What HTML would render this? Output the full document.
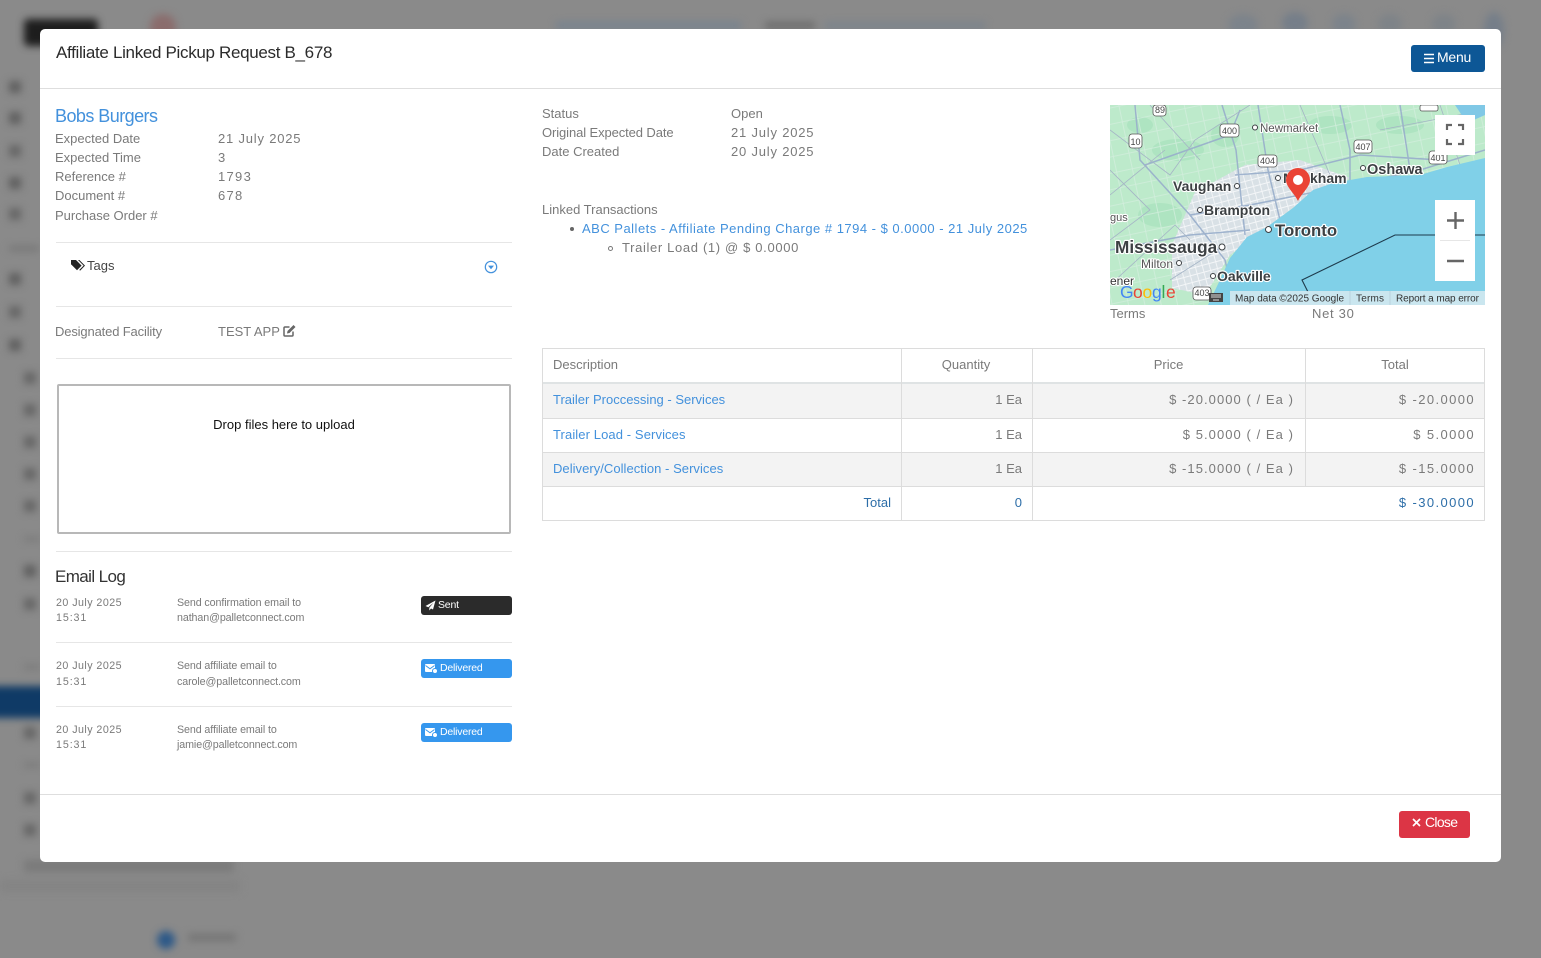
<!DOCTYPE html>
<html><head><meta charset="utf-8"><style>
html,body{margin:0;padding:0;width:1541px;height:958px;overflow:hidden;background:#8a8a8a;font-family:"Liberation Sans",sans-serif}
.bg{position:absolute;inset:0;filter:blur(4px)}
.bg div{position:absolute}
.modal{position:absolute;left:40px;top:29px;width:1461px;height:833px;background:#fff;border-radius:5px;overflow:hidden}
.p{position:absolute;left:0;top:0;width:1541px;height:958px}
.t{position:absolute;white-space:nowrap;line-height:18px;font-size:13px;color:#7a7a7a;font-weight:400;transform:translateY(1px)}
.d{letter-spacing:.8px}
.m{letter-spacing:1.06px}
.n{letter-spacing:1.4px}
.a{color:#4391dc}
.h{position:absolute;height:1px;background:#e6e6e6}
.r{position:absolute;text-align:right}
.s{font-size:10.7px;color:#7a7a7a;letter-spacing:-.1px}
.s.d{letter-spacing:.45px}
.b{position:absolute;left:421px;width:91px;height:19px;border-radius:3px;color:#fff;font-size:10.5px;line-height:19px;letter-spacing:-.2px}
.b span{position:absolute;left:17px;white-space:nowrap}
</style></head><body>
<div class="bg">
<div style="left:24px;top:19px;width:74px;height:27px;background:#1d1d1d;border-radius:4px"></div>
<div style="left:150px;top:14px;width:26px;height:26px;background:#8a6c6c;border-radius:50%"></div>
<div style="left:556px;top:22px;width:185px;height:7px;background:#76828f"></div>
<div style="left:765px;top:22px;width:50px;height:7px;background:#6c6c6c"></div>
<div style="left:825px;top:22px;width:160px;height:7px;background:#7a838c"></div>
<div style="left:1228px;top:14px;width:30px;height:22px;background:#7c838b;border-radius:50%"></div>
<div style="left:1282px;top:12px;width:26px;height:22px;background:#757e89;border-radius:50%"></div>
<div style="left:1332px;top:14px;width:24px;height:20px;background:#7c838b;border-radius:50%"></div>
<div style="left:1378px;top:14px;width:24px;height:20px;background:#7e8388;border-radius:50%"></div>
<div style="left:1432px;top:14px;width:24px;height:20px;background:#7e8388;border-radius:50%"></div>
<div style="left:1484px;top:12px;width:20px;height:36px;background:#757e89;border-radius:50%"></div>
<div style="left:9px;top:81px;width:12px;height:12px;background:#5f5f5f"></div>
<div style="left:9px;top:112px;width:12px;height:12px;background:#5f5f5f"></div>
<div style="left:9px;top:145px;width:12px;height:12px;background:#666"></div>
<div style="left:9px;top:177px;width:12px;height:12px;background:#5f5f5f"></div>
<div style="left:9px;top:208px;width:12px;height:12px;background:#666"></div>
<div style="left:9px;top:246px;width:30px;height:5px;background:#757575"></div>
<div style="left:9px;top:273px;width:12px;height:12px;background:#5f5f5f"></div>
<div style="left:9px;top:306px;width:12px;height:12px;background:#666"></div>
<div style="left:9px;top:339px;width:12px;height:12px;background:#5f5f5f"></div>
<div style="left:24px;top:372px;width:12px;height:12px;background:#666"></div>
<div style="left:24px;top:404px;width:12px;height:12px;background:#666"></div>
<div style="left:24px;top:436px;width:12px;height:12px;background:#666"></div>
<div style="left:24px;top:468px;width:12px;height:12px;background:#666"></div>
<div style="left:24px;top:500px;width:12px;height:12px;background:#666"></div>
<div style="left:24px;top:537px;width:16px;height:4px;background:#777"></div>
<div style="left:24px;top:565px;width:12px;height:12px;background:#5f5f5f"></div>
<div style="left:24px;top:598px;width:12px;height:12px;background:#666"></div>
<div style="left:24px;top:665px;width:16px;height:4px;background:#777"></div>
<div style="left:-10px;top:686px;width:250px;height:32px;background:#0f3a66"></div>
<div style="left:24px;top:727px;width:12px;height:12px;background:#666"></div>
<div style="left:24px;top:763px;width:16px;height:4px;background:#777"></div>
<div style="left:24px;top:792px;width:12px;height:12px;background:#666"></div>
<div style="left:24px;top:824px;width:12px;height:12px;background:#666"></div>
<div style="left:24px;top:860px;width:210px;height:12px;background:#7a7a7a"></div>
<div style="left:0;top:880px;width:240px;height:12px;background:#848484"></div>
<div style="left:157px;top:931px;width:18px;height:18px;background:#2c5888;border-radius:50%"></div>
<div style="left:188px;top:934px;width:48px;height:7px;background:#747474"></div>
</div>
<div class="modal"></div>
<div class="p">
<div class="t" style="left:56px;top:43px;font-size:17px;line-height:20px;color:#2b2b2b;letter-spacing:-.32px;transform:none">Affiliate Linked Pickup Request B_678</div>
<div class="h" style="left:40px;top:88px;width:1461px;height:1px;background:#dedede"></div>
<div style="position:absolute;left:1411px;top:45px;width:74px;height:27px;background:#0d5796;border-radius:3px;color:#fff;font-size:14px;line-height:25px"><svg style="position:absolute;left:13px;top:8px" width="11" height="11" viewBox="0 0 11 11"><path d="M0 1.5h10M0 5.5h10M0 9.5h10" stroke="#fff" stroke-width="1.4"/></svg><span style="position:absolute;left:26px;letter-spacing:-.25px">Menu</span></div>

<div class="t a" style="left:55px;top:106px;font-size:18px;line-height:20px;letter-spacing:-.55px;transform:none">Bobs Burgers</div>
<div class="t" style="left:55px;top:129px">Expected Date</div><div class="t d" style="left:218px;top:129px">21 July 2025</div>
<div class="t" style="left:55px;top:148px">Expected Time</div><div class="t d" style="left:218px;top:148px">3</div>
<div class="t" style="left:55px;top:167px">Reference #</div><div class="t d" style="left:218px;top:167px;letter-spacing:1.3px">1793</div>
<div class="t" style="left:55px;top:186px">Document #</div><div class="t d" style="left:218px;top:186px;letter-spacing:1.3px">678</div>
<div class="t" style="left:55px;top:206px">Purchase Order #</div>
<div class="h" style="left:56px;top:242px;width:456px"></div>
<svg style="position:absolute;left:71px;top:259px" width="14" height="12" viewBox="0 0 14 12"><path d="M0 1v4.2L6 11.2 10.6 6.6 5 1z" fill="#222"/><path d="M7 1l5.6 5.6-4.4 4.4 1 .6L14 6.6 8.4 1z" fill="#222"/></svg>
<div class="t" style="left:87px;top:256px;color:#444">Tags</div>
<svg style="position:absolute;left:484px;top:260px" width="14" height="14" viewBox="0 0 14 14"><circle cx="7" cy="7" r="5.7" fill="none" stroke="#4391dc" stroke-width="1.2"/><path d="M4 5.6h6L7 9.2z" fill="#4391dc"/></svg>
<div class="h" style="left:56px;top:306px;width:456px"></div>
<div class="t" style="left:55px;top:322px;letter-spacing:-.15px">Designated Facility</div>
<div class="t" style="left:218px;top:322px">TEST APP</div>
<svg style="position:absolute;left:283px;top:324px" width="13" height="13" viewBox="0 0 13 13"><path d="M10 7.5V11a1 1 0 0 1-1 1H2a1 1 0 0 1-1-1V4a1 1 0 0 1 1-1h4.500" fill="none" stroke="#666" stroke-width="1.500"/><path d="M4.500 7l6-6 2 2-6 6-2.500.5z" fill="#666"/></svg>
<div class="h" style="left:56px;top:358px;width:456px"></div>
<div style="position:absolute;left:57px;top:384px;width:450px;height:146px;border:2px solid #b8b8b8;border-radius:2px"></div>
<div class="t" style="left:57px;top:415px;width:454px;text-align:center;color:#111">Drop files here to upload</div>
<div class="h" style="left:56px;top:551px;width:456px"></div>
<div class="t" style="left:55px;top:566px;font-size:17px;line-height:20px;color:#333;letter-spacing:-.6px">Email Log</div>

<div class="t s d" style="left:56px;top:593px">20 July 2025</div><div class="t s d" style="left:56px;top:608px;letter-spacing:.9px">15:31</div>
<div class="t s" style="left:177px;top:593px">Send confirmation email to</div><div class="t s" style="left:177px;top:608px">nathan@palletconnect.com</div>
<div class="b" style="top:596px;background:#2b2b2b"><svg style="position:absolute;left:4px;top:4px" width="11" height="11" viewBox="0 0 11 11"><path d="M10.500.5L.5 6l2.800 1.200L8.500 2.800 4.300 7.700V10.500L6 8.500l2 1z" fill="#fff"/></svg><span>Sent</span></div>
<div class="h" style="left:56px;top:642px;width:456px"></div>

<div class="t s d" style="left:56px;top:656px">20 July 2025</div><div class="t s d" style="left:56px;top:672px;letter-spacing:.9px">15:31</div>
<div class="t s" style="left:177px;top:656px">Send affiliate email to</div><div class="t s" style="left:177px;top:672px">carole@palletconnect.com</div>
<div class="b" style="top:659px;background:#3597ee"><svg style="position:absolute;left:4px;top:5px" width="13" height="10" viewBox="0 0 13 10"><rect x="0" y="0" width="10" height="8" rx="1" fill="#fff"/><path d="M0.500 1.500L5 4.800 9.500 1.500" stroke="#3597ee" fill="none"/><circle cx="10" cy="7" r="2.500" fill="#fff" stroke="#3597ee"/></svg><span style="left:19px">Delivered</span></div>
<div class="h" style="left:56px;top:706px;width:456px"></div>

<div class="t s d" style="left:56px;top:720px">20 July 2025</div><div class="t s d" style="left:56px;top:735px;letter-spacing:.9px">15:31</div>
<div class="t s" style="left:177px;top:720px">Send affiliate email to</div><div class="t s" style="left:177px;top:735px">jamie@palletconnect.com</div>
<div class="b" style="top:723px;background:#3597ee"><svg style="position:absolute;left:4px;top:5px" width="13" height="10" viewBox="0 0 13 10"><rect x="0" y="0" width="10" height="8" rx="1" fill="#fff"/><path d="M0.500 1.500L5 4.800 9.500 1.500" stroke="#3597ee" fill="none"/><circle cx="10" cy="7" r="2.500" fill="#fff" stroke="#3597ee"/></svg><span style="left:19px">Delivered</span></div>

<div class="t" style="left:542px;top:104px">Status</div><div class="t" style="left:731px;top:104px">Open</div>
<div class="t" style="left:542px;top:123px;letter-spacing:-.1px">Original Expected Date</div><div class="t d" style="left:731px;top:123px">21 July 2025</div>
<div class="t" style="left:542px;top:142px">Date Created</div><div class="t d" style="left:731px;top:142px">20 July 2025</div>
<div class="t" style="left:542px;top:200px">Linked Transactions</div>
<div style="position:absolute;left:570px;top:227px;width:4px;height:4px;border-radius:50%;background:#666"></div>
<div class="t a" style="left:582px;top:219px;letter-spacing:.49px">ABC Pallets - Affiliate Pending Charge # 1794 - $ 0.0000 - 21 July 2025</div>
<div style="position:absolute;left:608px;top:246px;width:3px;height:3px;border-radius:50%;border:1px solid #777"></div>
<div class="t" style="left:622px;top:238px;letter-spacing:.65px">Trailer Load (1) @ $ 0.0000</div>

<svg style="position:absolute;left:1110px;top:105px" width="375" height="200" viewBox="1110 105 375 200" font-family="Liberation Sans, sans-serif">
<defs>
<pattern id="g" width="16" height="16" patternUnits="userSpaceOnUse" patternTransform="rotate(-12)"><path d="M0 .5h16M.5 0v16" stroke="#d2eedd" stroke-width=".8" fill="none"/></pattern>
<pattern id="u" width="7" height="7" patternUnits="userSpaceOnUse" patternTransform="rotate(-15)"><path d="M0 .5h7M.5 0v7" stroke="#f4f6f8" stroke-width=".9" fill="none"/></pattern>
</defs>
<rect x="1110" y="105" width="375" height="200" fill="#bdeacb"/>
<g fill="#aee4c1"><ellipse cx="1178" cy="150" rx="26" ry="11"/><ellipse cx="1330" cy="125" rx="22" ry="9"/><ellipse cx="1160" cy="215" rx="22" ry="12"/><ellipse cx="1400" cy="125" rx="24" ry="9"/><ellipse cx="1225" cy="135" rx="14" ry="12"/><ellipse cx="1140" cy="125" rx="13" ry="8"/></g>
<rect x="1110" y="105" width="375" height="200" fill="url(#g)"/>
<path d="M1172 245L1195 192 1245 165 1300 160 1350 178 1310 195 1270 225 1230 255 1205 295 1172 288z" fill="#d9e1e6"/>
<path d="M1172 245L1195 192 1245 165 1300 160 1350 178 1310 195 1270 225 1230 255 1205 295 1172 288z" fill="url(#u)"/>
<g fill="none" stroke="#98aecb" stroke-width="1.500" opacity=".9"><path d="M1135 105L1140 160 1190 215 1225 260 1232 290"/><path d="M1145 165L1230 135 1240 110"/><path d="M1222 105L1236 150 1245 235"/><path d="M1258 105L1268 170 1280 220"/><path d="M1190 215L1250 205 1300 195 1350 185 1420 170 1485 150"/><path d="M1235 175L1300 170 1360 155 1440 160"/><path d="M1110 250L1190 235 1250 230"/><path d="M1340 105L1350 150 1350 185"/><path d="M1400 105L1410 170"/></g>
<g fill="none" stroke="#a5b4c6" stroke-width=".8"><path d="M1110 130L1170 175 1195 140 1250 105"/><path d="M1110 195L1165 150M1110 285L1175 225 1190 240M1150 105L1200 160M1300 105L1330 175M1440 105L1460 165M1380 130L1485 110M1110 170L1150 210 1110 240M1170 280L1225 245"/></g>
<polygon points="1485,158 1447,167 1420,175 1367,177 1333,183 1313,190 1293,208 1267,227 1247,237 1230,258 1219,282 1208,305 1485,305" fill="#80d0e8"/>
<path d="M1485 235H1395L1302 280 1308 292" fill="none" stroke="#1d3a4c" stroke-width="1.100"/>
<path d="M1455 105h30v10l-18 8z" fill="#80c8e6"/>
<g stroke="#fff" stroke-width="2.200" paint-order="stroke" stroke-linejoin="round" fill="#3c4043" font-weight="700">
<text x="1260" y="132" font-size="11.500" font-weight="400" fill="#555">Newmarket</text>
<text x="1367" y="174" font-size="14.500">Oshawa</text>
<text x="1173" y="191" font-size="14">Vaughan</text>
<text x="1204" y="215" font-size="14">Brampton</text>
<text x="1275" y="236" font-size="16.800">Toronto</text>
<text x="1115" y="253" font-size="17.200">Mississauga</text>
<text x="1141" y="268" font-size="12" font-weight="400" fill="#555">Milton</text>
<text x="1217" y="281" font-size="14">Oakville</text>
<text x="1110" y="221" font-size="11" font-weight="400" fill="#555">gus</text>
<text x="1110" y="285" font-size="12" font-weight="400" fill="#333">ener</text>
<text x="1283" y="183" font-size="14">M</text>
<text x="1310" y="183" font-size="14">kham</text>
</g>
<g fill="#fff" stroke="#3c4043" stroke-width="1"><circle cx="1255" cy="127.500" r="2.500"/><circle cx="1278" cy="178" r="2.500"/><circle cx="1363" cy="168" r="2.500"/><circle cx="1237" cy="186" r="2.500"/><circle cx="1200" cy="210" r="2.500"/><circle cx="1268.500" cy="229.500" r="3"/><circle cx="1222" cy="247" r="3"/><circle cx="1179" cy="263" r="2.500"/><circle cx="1213" cy="276" r="2.500"/></g>
<g font-size="9" fill="#444" text-anchor="middle" stroke="none">
<g fill="#fff" stroke="#555" stroke-width=".8"><rect x="1220" y="124" width="19" height="13" rx="3"/><rect x="1129" y="134" width="13" height="14" rx="3"/><rect x="1258" y="155" width="19" height="12" rx="3"/><rect x="1354" y="140" width="18" height="13" rx="3"/><rect x="1429" y="151" width="18" height="13" rx="3"/><rect x="1153" y="105" width="13" height="11" rx="3"/><rect x="1193" y="287" width="18" height="13" rx="3"/><rect x="1420" y="105" width="18" height="6" rx="2"/></g>
<text x="1229.500" y="134">400</text><text x="1135.500" y="145">10</text><text x="1267.500" y="164">404</text><text x="1363" y="150">407</text><text x="1438" y="161">401</text><text x="1160" y="113">89</text><text x="1202" y="296">403</text>
</g>
<path d="M1298 201c-3-7-12-14-12-21a12 12 0 0 1 24 0c0 7-9 14-12 21z" fill="#ea4335"/><circle cx="1298" cy="180" r="5" fill="#fff"/>
<rect x="1230" y="291" width="255" height="14" fill="#d2e8ef" opacity=".9"/>
<g font-size="10" fill="#333"><text x="1235" y="301.500" textLength="109">Map data ©2025 Google</text><text x="1356" y="301.500" textLength="28">Terms</text><text x="1396" y="301.500" textLength="83">Report a map error</text></g>
<path d="M1350 291v14M1390 291v14" stroke="#b9d3dd"/>
<rect x="1209" y="293" width="14" height="9" fill="#444"/><path d="M1211 295h10M1211 297h10M1213 300h6" stroke="#ddd" stroke-width=".9"/>
<g font-size="17.500" font-weight="400"><text x="1120" y="298" fill="#4285f4">G</text><text x="1133" y="298" fill="#ea4335">o</text><text x="1142.500" y="298" fill="#fbbc05">o</text><text x="1152" y="298" fill="#4285f4">g</text><text x="1161.500" y="298" fill="#34a853">l</text><text x="1166" y="298" fill="#ea4335">e</text></g>
<rect x="1435" y="115" width="40" height="40" fill="#fff"/>
<path d="M1447 130v-5h5M1458 125h5v5M1463 139v5h-5M1452 144h-5v-5" fill="none" stroke="#666" stroke-width="2.200"/>
<rect x="1435" y="200" width="40" height="81" fill="#fff"/>
<path d="M1440 240.500h30" stroke="#e6e6e6"/>
<path d="M1447 220.500h17M1455.500 212v17M1447 261h17" stroke="#666" stroke-width="2.400" fill="none"/>
</svg>
<div class="t" style="left:1110px;top:304px">Terms</div><div class="t d" style="left:1312px;top:304px;letter-spacing:.7px">Net 30</div>

<div style="position:absolute;left:542px;top:348px;width:941px;height:171px;border:1px solid #dcdcdc"></div>
<div style="position:absolute;left:543px;top:384px;width:941px;height:34px;background:#f3f3f3"></div>
<div style="position:absolute;left:543px;top:453px;width:941px;height:33px;background:#f3f3f3"></div>
<div class="h" style="left:543px;top:382px;width:941px;height:2px;background:#dfe3e4"></div>
<div class="h" style="left:543px;top:418px;width:941px;background:#dcdcdc"></div>
<div class="h" style="left:543px;top:452px;width:941px;background:#dcdcdc"></div>
<div class="h" style="left:543px;top:486px;width:941px;background:#dcdcdc"></div>
<div class="h" style="left:901px;top:349px;width:1px;height:171px;background:#dcdcdc"></div>
<div class="h" style="left:1032px;top:349px;width:1px;height:171px;background:#dcdcdc"></div>
<div class="h" style="left:1305px;top:349px;width:1px;height:137px;background:#dcdcdc"></div>
<div class="t" style="left:553px;top:355px">Description</div>
<div class="t" style="left:901px;width:130px;top:355px;text-align:center">Quantity</div>
<div class="t" style="left:1033px;width:271px;top:355px;text-align:center">Price</div>
<div class="t" style="left:1306px;width:178px;top:355px;text-align:center">Total</div>
<div class="t a" style="left:553px;top:390px">Trailer Proccessing - Services</div>
<div class="t a" style="left:553px;top:425px;letter-spacing:.1px">Trailer Load - Services</div>
<div class="t a" style="left:553px;top:459px;letter-spacing:.04px">Delivery/Collection - Services</div>
<div class="t r" style="right:519px;top:390px">1 Ea</div><div class="t r" style="right:519px;top:425px">1 Ea</div><div class="t r" style="right:519px;top:459px">1 Ea</div>
<div class="t r m" style="right:247px;top:390px">$ -20.0000 ( / Ea )</div>
<div class="t r m" style="right:247px;top:425px">$ 5.0000 ( / Ea )</div>
<div class="t r m" style="right:247px;top:459px">$ -15.0000 ( / Ea )</div>
<div class="t r n" style="right:66px;top:390px">$ -20.0000</div>
<div class="t r n" style="right:66px;top:425px">$ 5.0000</div>
<div class="t r n" style="right:66px;top:459px">$ -15.0000</div>
<div class="t r" style="right:650px;top:493px;color:#2d6ea8">Total</div>
<div class="t r" style="right:519px;top:493px;color:#2d6ea8">0</div>
<div class="t r n" style="right:66px;top:493px;color:#2d6ea8">$ -30.0000</div>

<div class="h" style="left:40px;top:794px;width:1461px;background:#dedede"></div>
<div style="position:absolute;left:1399px;top:811px;width:71px;height:27px;background:#dc3545;border-radius:3px;color:#fff;font-size:14px;line-height:23px"><svg style="position:absolute;left:13px;top:7px" width="9" height="9" viewBox="0 0 9 9"><path d="M1 1l7 7M8 1l-7 7" stroke="#fff" stroke-width="1.700"/></svg><span style="position:absolute;left:26px;letter-spacing:-.7px">Close</span></div>
</div>
</body></html>
